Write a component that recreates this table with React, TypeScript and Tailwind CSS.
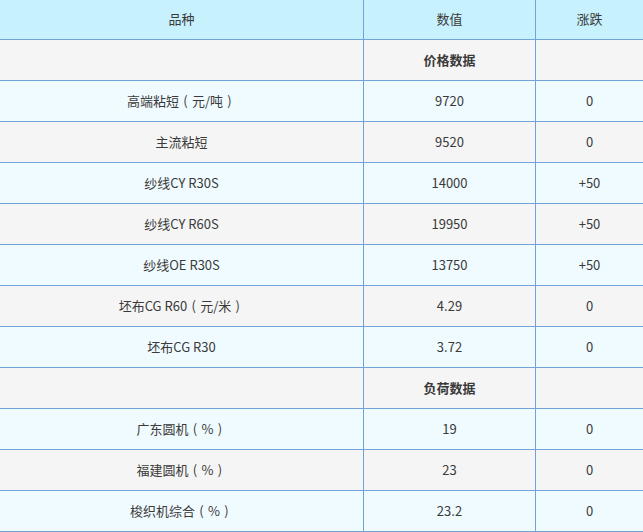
import React from "react";

type Row = { name: string; value: string; change: string; section?: boolean };

const rows: Row[] = [
  { name: "", value: "价格数据", change: "", section: true },
  { name: "高端粘短（元/吨）", value: "9720", change: "0" },
  { name: "主流粘短", value: "9520", change: "0" },
  { name: "纱线CY R30S", value: "14000", change: "+50" },
  { name: "纱线CY R60S", value: "19950", change: "+50" },
  { name: "纱线OE R30S", value: "13750", change: "+50" },
  { name: "坯布CG R60（元/米）", value: "4.29", change: "0" },
  { name: "坯布CG R30", value: "3.72", change: "0" },
  { name: "", value: "负荷数据", change: "", section: true },
  { name: "广东圆机（%）", value: "19", change: "0" },
  { name: "福建圆机（%）", value: "23", change: "0" },
  { name: "梭织机综合（%）", value: "23.2", change: "0" },
];

function Name({ text }: { text: string }) {
  const parts = text.split(/([（）])/);
  return (
    <span>
      {parts.map((p, i) =>
        p === "（" || p === "）" ? (
          <span key={i} className="inline-block w-[1em] text-center">
            {p === "（" ? "(" : ")"}
          </span>
        ) : (
          <span key={i}>{p}</span>
        )
      )}
    </span>
  );
}

export default function App() {
  return (
    <div
      className="w-[643px] h-[532px] overflow-hidden bg-white text-[13px] text-[#3a3a3a]"
      style={{ fontFamily: '"Noto Sans CJK SC", "Noto Sans", sans-serif' }}
    >
      <div className="grid grid-cols-[364px_172px_1fr] h-[40px] bg-[#c6f1fd] border-b border-[#72a3d8]">
        <div className="flex items-center justify-center border-r border-[#72a3d8] pb-[2px]">品种</div>
        <div className="flex items-center justify-center border-r border-[#72a3d8] pb-[2px]">数值</div>
        <div className="flex items-center justify-center pb-[2px]">涨跌</div>
      </div>
      {rows.map((r, i) => (
        <div
          key={i}
          className={`grid grid-cols-[364px_172px_1fr] h-[41px] border-b border-[#72a3d8] ${
            i % 2 === 0 ? "bg-[#f5f5f5]" : "bg-[#f0fbff]"
          }`}
        >
          <div className="flex items-center justify-center border-r border-[#72a3d8]">
            <Name text={r.name} />
          </div>
          <div
            className={`flex items-center justify-center border-r border-[#72a3d8] ${
              r.section ? "font-bold" : ""
            }`}
          >
            {r.value}
          </div>
          <div className="flex items-center justify-center">{r.change}</div>
        </div>
      ))}
    </div>
  );
}
